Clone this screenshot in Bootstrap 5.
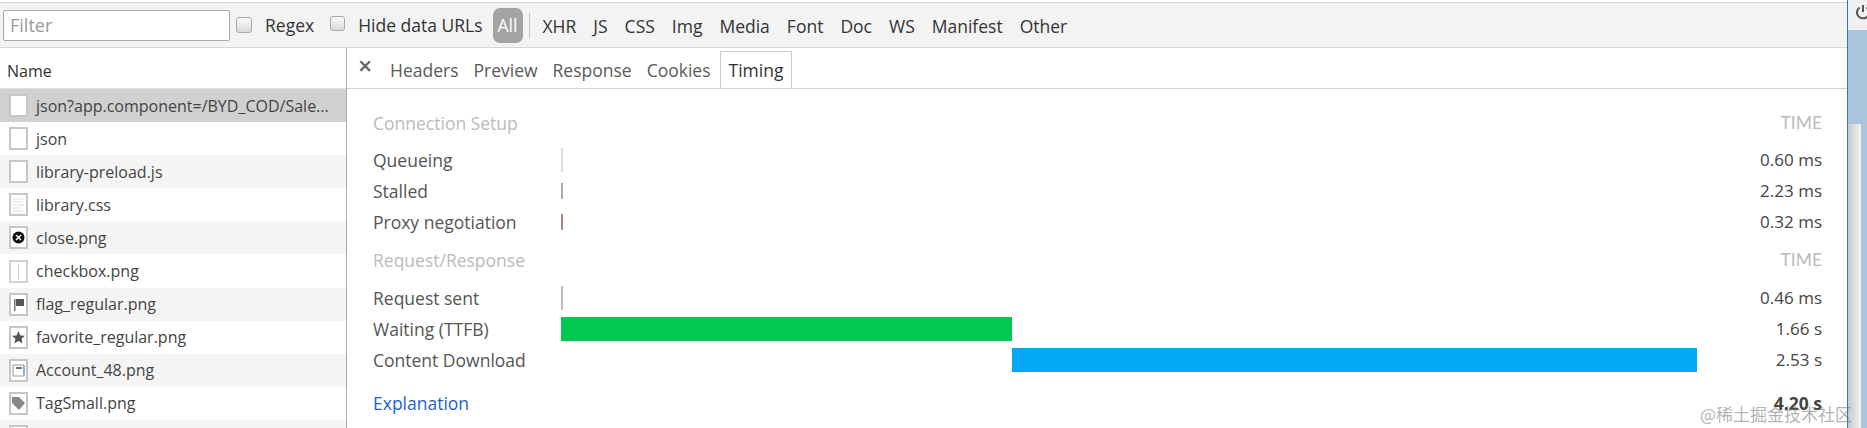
<!DOCTYPE html>
<html lang="en">
<head>
  <meta charset="UTF-8" />
  <title>Network Timing</title>
  <link href="https://cdn.jsdelivr.net/npm/bootstrap@5.3.0/dist/css/bootstrap.min.css" rel="stylesheet"/>
  <style>
    html, body { height: 428px; overflow: hidden; }
    body {
      background: #a9c4dc;
      font-family: "Open Sans", "Noto Sans", sans-serif;
      font-size: 16px;
      color: #444;
      position: relative;
    }
    .devtools { width: 1848px; height: 428px; background: #fff; border-right: 1px solid #2b78b8; padding-top: 2px; overflow: hidden; }
    .side-strip { width: 19px; overflow: hidden; }
    .strip-top { height: 30px; background: #f0f0f0; padding: 4px 0 0 7px; }
    .strip-box { height: 304px; width: 13px; margin-top: 94px; background: linear-gradient(90deg, #c8c8c8, #f2f2f2); }
    .filter-bar { height: 46px; background: #f3f3f3; border-top: 1px solid #d6d6d6; border-bottom: 1px solid #d6d6d6; padding-left: 3px; color: #333; font-size: 17.5px; }
    .filter-input { width: 227px; height: 31px; border: 1px solid #a9a9a9; border-radius: 2px; background: #fff; color: #999; padding-left: 6px; font-size: 18px; line-height: 29px; }
    .fake-check { width: 16px; height: 16px; border: 1px solid #aaa; border-radius: 3px; background: linear-gradient(#fafafa, #d9d9d9); flex: none; }
    .check-one { margin-left: 6px; }
    .check-two { margin-left: 16px; width: 15px; height: 15px; margin-bottom: 3px; }
    .check-text { margin-left: 13px; }
    .all-pill { width: 30px; height: 35px; border-radius: 7px; background: #a3a3a3; color: #fff; line-height: 35px; text-align: center; margin-left: 10px; }
    .bar-sep { width: 1px; height: 25px; background: #c4c4c4; margin: 0 13px 0 6px; }
    .filter-types { gap: 17px; padding-top: 2px; }
    .lower-area { height: 380px; overflow: hidden; }
    .name-col { width: 346px; border-right: 1px solid #aaa; flex: none; box-sizing: content-box; overflow: hidden; }
    .name-head { height: 41px; line-height: 41px; padding: 3px 0 0 7px; color: #333; }
    .name-row { height: 33.1px; display: flex; align-items: center; padding-left: 9px; color: #444; white-space: nowrap; overflow: hidden; }
    .name-row:nth-child(odd) { background: #f5f5f5; }
    .name-row.picked { background: #d0d0d0; }
    .file-ico { width: 19px; height: 23px; margin-right: 8px; flex: none; display: block; }
    .tab-strip { height: 41px; border-bottom: 1px solid #d0d0d0; padding-left: 11px; color: #5a5a5a; font-size: 17.5px; }
    .tab-close { font-size: 25px; line-height: 1; color: #666; width: 25px; font-weight: 600; padding-bottom: 5px; }
    .tab-item { padding: 4px 7px 0; margin-right: 1px; line-height: 35px; }
    .tab-item.picked { border: 1px solid #ccc; border-bottom: 0; height: 37px; margin-left: 1px; padding: 0 8px; color: #333; line-height: 36px; }
    .timing-wrap { padding: 15px 25px 0 26px; flex: 1; min-width: 0; font-size: 17.5px; }
    .group-head { height: 38px; color: #bbb; margin-bottom: 2.5px; }
    .group-next { margin-top: 3.5px; margin-bottom: 3.5px; }
    .time-tag { font-family: Lato, sans-serif; font-size: 17.5px; }
    .time-row { height: 31px; color: #555; }
    .time-label { width: 188px; flex: none; }
    .time-track { flex: 1; height: 100%; position: relative; }
    .time-fill { height: 24px; }
    .time-value { width: 125px; text-align: right; color: #444; font-size: 17px; }
    .thin { width: 2px; }
    .explain { color: #1e5fd0; }
    .explain-row { margin-top: 15px; line-height: 24px; }
    .water-mark { position: absolute; left: 1700px; top: 401px; font-family: "Noto Sans CJK SC", sans-serif; font-size: 17px; color: rgba(110,110,110,.55); white-space: nowrap; }
  </style>
</head>
<body class="d-flex">
  <svg width="0" height="0" class="position-absolute">
    <symbol id="doc" viewBox="0 0 19 23"><rect x="1" y="1" width="17" height="21" fill="#fff" stroke="#c6c6c6" stroke-width="2"/></symbol>
  </svg>

  <div class="devtools flex-shrink-0">
    <div class="filter-bar d-flex align-items-center">
      <div class="filter-input">Filter</div>
      <span class="fake-check check-one"></span><span class="check-text">Regex</span>
      <span class="fake-check check-two"></span><span class="check-text">Hide data URLs</span>
      <span class="all-pill">All</span>
      <span class="bar-sep"></span>
      <div class="filter-types d-flex">
        <span>XHR</span><span>JS</span><span>CSS</span><span>Img</span><span>Media</span><span>Font</span><span>Doc</span><span>WS</span><span>Manifest</span><span>Other</span>
      </div>
    </div>

    <div class="lower-area d-flex">
      <div class="name-col">
        <div class="name-head border-bottom">Name</div>
        <div>
          <div class="name-row picked"><svg class="file-ico"><use href="#doc"/></svg>json?app.component=/BYD_COD/Sale...</div>
          <div class="name-row"><svg class="file-ico"><use href="#doc"/></svg>json</div>
          <div class="name-row"><svg class="file-ico"><use href="#doc"/></svg>library-preload.js</div>
          <div class="name-row">
            <svg class="file-ico" viewBox="0 0 19 23"><rect x="1" y="1" width="17" height="21" fill="#fff" stroke="#c6c6c6" stroke-width="2"/><path d="M4 6h11M4 9h9M4 12h11M4 15h8M4 18h10" stroke="#ddd"/></svg>library.css
          </div>
          <div class="name-row">
            <svg class="file-ico" viewBox="0 0 19 23"><rect x="1" y="1" width="17" height="21" fill="#fff" stroke="#c6c6c6" stroke-width="2"/><circle cx="9.5" cy="11.5" r="6" fill="#111"/><path d="M7 9l5 5M12 9l-5 5" stroke="#fff" stroke-width="1.5"/></svg>close.png
          </div>
          <div class="name-row">
            <svg class="file-ico" viewBox="0 0 19 23"><rect x="1" y="1" width="17" height="21" fill="#fff" stroke="#d0d0d0" stroke-width="2"/><path d="M9.5 3v17" stroke="#e8cdbb"/></svg>checkbox.png
          </div>
          <div class="name-row">
            <svg class="file-ico" viewBox="0 0 19 23"><rect x="1" y="1" width="17" height="21" fill="#fff" stroke="#c6c6c6" stroke-width="2"/><path d="M5 6h1.5v12H5z" fill="#777"/><path d="M7 6h8v7H7z" fill="#555"/></svg>flag_regular.png
          </div>
          <div class="name-row">
            <svg class="file-ico" viewBox="0 0 19 23"><rect x="1" y="1" width="17" height="21" fill="#fff" stroke="#c6c6c6" stroke-width="2"/><path d="M9.5 5l1.9 4.4 4.6.4-3.5 3 1.1 4.7-4.1-2.5-4.1 2.5 1.1-4.7-3.5-3 4.6-.4z" fill="#555"/></svg>favorite_regular.png
          </div>
          <div class="name-row">
            <svg class="file-ico" viewBox="0 0 19 23"><rect x="1" y="1" width="17" height="21" fill="#fff" stroke="#c6c6c6" stroke-width="2"/><path d="M4 6h11v11H4z" fill="none" stroke="#999"/><path d="M7 9h6" stroke="#444" stroke-width="1.5"/><path d="M15 7v9" stroke="#3a9ae0"/></svg>Account_48.png
          </div>
          <div class="name-row">
            <svg class="file-ico" viewBox="0 0 19 23"><rect x="1" y="1" width="17" height="21" fill="#fff" stroke="#c6c6c6" stroke-width="2"/><path d="M3 5h7l6 6-6 7-7-7z" fill="#888"/></svg>TagSmall.png
          </div>
          <div class="name-row"><svg class="file-ico"><use href="#doc"/></svg></div>
        </div>
      </div>

      <div class="flex-grow-1 d-flex flex-column min-w-0">
        <div class="tab-strip d-flex align-items-end">
          <span class="tab-close align-self-center">&#215;</span>
          <span class="tab-item">Headers</span>
          <span class="tab-item">Preview</span>
          <span class="tab-item">Response</span>
          <span class="tab-item">Cookies</span>
          <span class="tab-item picked">Timing</span>
        </div>

        <div class="timing-wrap">
          <div class="group-head d-flex justify-content-between align-items-center">
            <span>Connection Setup</span><span class="time-tag">TIME</span>
          </div>
          <div class="time-row d-flex align-items-center">
            <span class="time-label">Queueing</span>
            <div class="time-track d-flex align-items-center"><div class="time-fill thin" style="background:#ddd"></div></div>
            <span class="time-value">0.60 ms</span>
          </div>
          <div class="time-row d-flex align-items-center">
            <span class="time-label">Stalled</span>
            <div class="time-track d-flex align-items-center"><div class="time-fill thin" style="background:#aaa;height:16px"></div></div>
            <span class="time-value">2.23 ms</span>
          </div>
          <div class="time-row d-flex align-items-center">
            <span class="time-label">Proxy negotiation</span>
            <div class="time-track d-flex align-items-center"><div class="time-fill thin" style="background:#a08a80;height:16px"></div></div>
            <span class="time-value">0.32 ms</span>
          </div>
          <div class="group-head group-next d-flex justify-content-between align-items-center">
            <span>Request/Response</span><span class="time-tag">TIME</span>
          </div>
          <div class="time-row d-flex align-items-center">
            <span class="time-label">Request sent</span>
            <div class="time-track d-flex align-items-center"><div class="time-fill thin" style="background:#b4bfca"></div></div>
            <span class="time-value">0.46 ms</span>
          </div>
          <div class="time-row d-flex align-items-center">
            <span class="time-label">Waiting (TTFB)</span>
            <div class="time-track d-flex align-items-center"><div class="time-fill" style="background:#00c853;width:451px"></div></div>
            <span class="time-value">1.66 s</span>
          </div>
          <div class="time-row d-flex align-items-center">
            <span class="time-label">Content Download</span>
            <div class="time-track d-flex align-items-center"><div class="time-fill" style="background:#03a9f4;width:685px;margin-left:451px"></div></div>
            <span class="time-value">2.53 s</span>
          </div>
          <div class="explain-row d-flex justify-content-between">
            <span class="explain">Explanation</span><span class="fw-bold">4.20 s</span>
          </div>
        </div>
      </div>
    </div>
  </div>

  <div class="side-strip">
    <div class="strip-top">
      <svg width="16" height="16" viewBox="0 0 16 16" class="d-block"><path d="M4.5 3.5a6 6 0 1 0 7 0" fill="none" stroke="#555" stroke-width="2"/><path d="M8 1v7" stroke="#555" stroke-width="2"/></svg>
    </div>
    <div class="strip-box"></div>
  </div>

  <div class="water-mark">@稀土掘金技术社区</div>

  <script src="https://cdn.jsdelivr.net/npm/bootstrap@5.3.0/dist/js/bootstrap.bundle.min.js"></script>
</body>
</html>
